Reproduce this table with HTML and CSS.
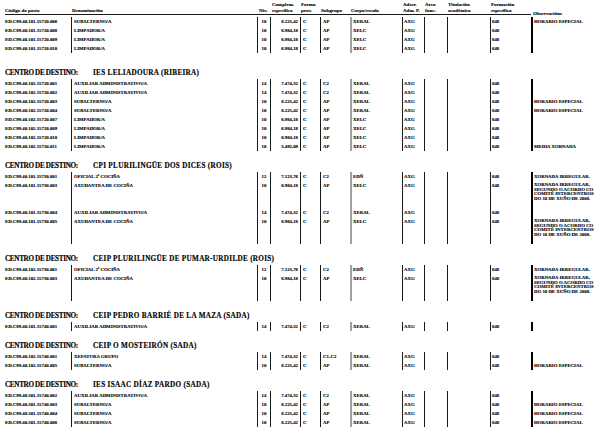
FILE: index.html
```html
<!DOCTYPE html>
<html lang="gl">
<head>
<meta charset="utf-8">
<title>Relación de postos</title>
<link rel="stylesheet" href="styles.css">
</head>
<body>
<div class="page">
  <div class="thead">
    <div class="h">Código do posto</div>
    <div class="h">Denominación</div>
    <div class="h">Niv.</div>
    <div class="h">Complem.<br>específico</div>
    <div class="h">Forma<br>prov.</div>
    <div class="h">Subgrupo</div>
    <div class="h">Corpo/escala</div>
    <div class="h">Adscr.<br>Adm. P.</div>
    <div class="h">Área<br>func.</div>
    <div class="h">Titulación<br>académica</div>
    <div class="h">Formación<br>específica</div>
    <div class="h">Observacións</div>
  </div>

  <div class="rows first-rows">
    <div class="row"><span class="code">ED.C99.40.101.15720.006</span><span class="den">SUBALTERNO/A</span><span class="niv">10</span><span class="comp">8.225,42</span><span class="forma">C</span><span class="sub">AP</span><span class="corpo">XERAL</span><span class="adscr">AXG</span><span class="area"></span><span class="tit"></span><span class="form">648</span><span class="obs">HORARIO ESPECIAL</span></div>
    <div class="row"><span class="code">ED.C99.40.101.15720.008</span><span class="den">LIMPADOR/A</span><span class="niv">10</span><span class="comp">6.984,18</span><span class="forma">C</span><span class="sub">AP</span><span class="corpo">XELC</span><span class="adscr">AXG</span><span class="area"></span><span class="tit"></span><span class="form">648</span><span class="obs"></span></div>
    <div class="row"><span class="code">ED.C99.40.101.15720.009</span><span class="den">LIMPADOR/A</span><span class="niv">10</span><span class="comp">6.984,18</span><span class="forma">C</span><span class="sub">AP</span><span class="corpo">XELC</span><span class="adscr">AXG</span><span class="area"></span><span class="tit"></span><span class="form">648</span><span class="obs"></span></div>
    <div class="row"><span class="code">ED.C99.40.101.15720.010</span><span class="den">LIMPADOR/A</span><span class="niv">10</span><span class="comp">6.984,18</span><span class="forma">C</span><span class="sub">AP</span><span class="corpo">XELC</span><span class="adscr">AXG</span><span class="area"></span><span class="tit"></span><span class="form">648</span><span class="obs"></span></div>
  </div>

  <section class="centro centro-first">
    <h2 class="centro-title"><span class="lbl">CENTRO DE DESTINO:</span><span class="nome">IES LELIADOURA (RIBEIRA)</span></h2>
    <div class="rows">
      <div class="row"><span class="code">ED.C99.40.102.15720.001</span><span class="den">AUXILIAR ADMINISTRATIVO/A</span><span class="niv">14</span><span class="comp">7.474,32</span><span class="forma">C</span><span class="sub">C2</span><span class="corpo">XERAL</span><span class="adscr">AXG</span><span class="area"></span><span class="tit"></span><span class="form">648</span><span class="obs"></span></div>
      <div class="row"><span class="code">ED.C99.40.102.15720.002</span><span class="den">AUXILIAR ADMINISTRATIVO/A</span><span class="niv">14</span><span class="comp">7.474,32</span><span class="forma">C</span><span class="sub">C2</span><span class="corpo">XERAL</span><span class="adscr">AXG</span><span class="area"></span><span class="tit"></span><span class="form">648</span><span class="obs"></span></div>
      <div class="row"><span class="code">ED.C99.40.102.15720.003</span><span class="den">SUBALTERNO/A</span><span class="niv">10</span><span class="comp">8.225,42</span><span class="forma">C</span><span class="sub">AP</span><span class="corpo">XERAL</span><span class="adscr">AXG</span><span class="area"></span><span class="tit"></span><span class="form">648</span><span class="obs">HORARIO ESPECIAL</span></div>
      <div class="row"><span class="code">ED.C99.40.102.15720.004</span><span class="den">SUBALTERNO/A</span><span class="niv">10</span><span class="comp">8.225,42</span><span class="forma">C</span><span class="sub">AP</span><span class="corpo">XERAL</span><span class="adscr">AXG</span><span class="area"></span><span class="tit"></span><span class="form">648</span><span class="obs">HORARIO ESPECIAL</span></div>
      <div class="row"><span class="code">ED.C99.40.102.15720.007</span><span class="den">LIMPADOR/A</span><span class="niv">10</span><span class="comp">6.984,18</span><span class="forma">C</span><span class="sub">AP</span><span class="corpo">XELC</span><span class="adscr">AXG</span><span class="area"></span><span class="tit"></span><span class="form">648</span><span class="obs"></span></div>
      <div class="row"><span class="code">ED.C99.40.102.15720.009</span><span class="den">LIMPADOR/A</span><span class="niv">10</span><span class="comp">6.984,18</span><span class="forma">C</span><span class="sub">AP</span><span class="corpo">XELC</span><span class="adscr">AXG</span><span class="area"></span><span class="tit"></span><span class="form">648</span><span class="obs"></span></div>
      <div class="row"><span class="code">ED.C99.40.102.15720.010</span><span class="den">LIMPADOR/A</span><span class="niv">10</span><span class="comp">6.984,18</span><span class="forma">C</span><span class="sub">AP</span><span class="corpo">XELC</span><span class="adscr">AXG</span><span class="area"></span><span class="tit"></span><span class="form">648</span><span class="obs"></span></div>
      <div class="row"><span class="code">ED.C99.40.102.15720.011</span><span class="den">LIMPADOR/A</span><span class="niv">10</span><span class="comp">3.492,09</span><span class="forma">C</span><span class="sub">AP</span><span class="corpo">XELC</span><span class="adscr">AXG</span><span class="area"></span><span class="tit"></span><span class="form">648</span><span class="obs">MEDIA XORNADA</span></div>
    </div>
  </section>

  <section class="centro">
    <h2 class="centro-title"><span class="lbl">CENTRO DE DESTINO:</span><span class="nome">CPI PLURILINGÜE DOS DICES (ROIS)</span></h2>
    <div class="rows">
      <div class="row"><span class="code">ED.C99.40.101.15730.001</span><span class="den">OFICIAL 2ª COCIÑA</span><span class="niv">12</span><span class="comp">7.123,76</span><span class="forma">C</span><span class="sub">C2</span><span class="corpo">EDÑ</span><span class="adscr">AXG</span><span class="area"></span><span class="tit"></span><span class="form">648</span><span class="obs">XORNADA IRREGULAR.</span></div>
      <div class="row tall"><span class="code">ED.C99.40.101.15730.003</span><span class="den">AXUDANTEA DE COCIÑA</span><span class="niv">10</span><span class="comp">6.984,18</span><span class="forma">C</span><span class="sub">AP</span><span class="corpo">XELC</span><span class="adscr">AXG</span><span class="area"></span><span class="tit"></span><span class="form">648</span><span class="obs multi">XORNADA IRREGULAR, SEGUNDO O ACORDO CO COMITÉ INTERCENTROS DO 10 DE XUÑO DE 2008.</span></div>
      <div class="row"><span class="code">ED.C99.40.101.15730.004</span><span class="den">AUXILIAR ADMINISTRATIVO/A</span><span class="niv">14</span><span class="comp">7.474,32</span><span class="forma">C</span><span class="sub">C2</span><span class="corpo">XERAL</span><span class="adscr">AXG</span><span class="area"></span><span class="tit"></span><span class="form">648</span><span class="obs"></span></div>
      <div class="row tall"><span class="code">ED.C99.40.101.15730.005</span><span class="den">AXUDANTEA DE COCIÑA</span><span class="niv">10</span><span class="comp">6.984,18</span><span class="forma">C</span><span class="sub">AP</span><span class="corpo">XELC</span><span class="adscr">AXG</span><span class="area"></span><span class="tit"></span><span class="form">648</span><span class="obs multi">XORNADA IRREGULAR, SEGUNDO O ACORDO CO COMITÉ INTERCENTROS DO 10 DE XUÑO DE 2008.</span></div>
    </div>
  </section>

  <section class="centro">
    <h2 class="centro-title"><span class="lbl">CENTRO DE DESTINO:</span><span class="nome">CEIP PLURILINGÜE DE PUMAR-URDILDE (ROIS)</span></h2>
    <div class="rows">
      <div class="row"><span class="code">ED.C99.40.102.15730.001</span><span class="den">OFICIAL 2ª COCIÑA</span><span class="niv">12</span><span class="comp">7.123,76</span><span class="forma">C</span><span class="sub">C2</span><span class="corpo">EDÑ</span><span class="adscr">AXG</span><span class="area"></span><span class="tit"></span><span class="form">648</span><span class="obs">XORNADA IRREGULAR.</span></div>
      <div class="row tall"><span class="code">ED.C99.40.102.15730.003</span><span class="den">AXUDANTEA DE COCIÑA</span><span class="niv">10</span><span class="comp">6.984,18</span><span class="forma">C</span><span class="sub">AP</span><span class="corpo">XELC</span><span class="adscr">AXG</span><span class="area"></span><span class="tit"></span><span class="form">648</span><span class="obs multi">XORNADA IRREGULAR, SEGUNDO O ACORDO CO COMITÉ INTERCENTROS DO 10 DE XUÑO DE 2008.</span></div>
    </div>
  </section>

  <section class="centro">
    <h2 class="centro-title"><span class="lbl">CENTRO DE DESTINO:</span><span class="nome">CEIP PEDRO BARRIÉ DE LA MAZA (SADA)</span></h2>
    <div class="rows">
      <div class="row"><span class="code">ED.C99.40.101.15740.001</span><span class="den">AUXILIAR ADMINISTRATIVO/A</span><span class="niv">14</span><span class="comp">7.474,32</span><span class="forma">C</span><span class="sub">C2</span><span class="corpo">XERAL</span><span class="adscr">AXG</span><span class="area"></span><span class="tit"></span><span class="form">648</span><span class="obs"></span></div>
    </div>
  </section>

  <section class="centro">
    <h2 class="centro-title"><span class="lbl">CENTRO DE DESTINO:</span><span class="nome">CEIP O MOSTEIRÓN (SADA)</span></h2>
    <div class="rows">
      <div class="row"><span class="code">ED.C99.40.102.15740.001</span><span class="den">XEFATURA GRUPO</span><span class="niv">14</span><span class="comp">7.474,32</span><span class="forma">C</span><span class="sub">C1-C2</span><span class="corpo">XERAL</span><span class="adscr">AXG</span><span class="area"></span><span class="tit"></span><span class="form">648</span><span class="obs"></span></div>
      <div class="row"><span class="code">ED.C99.40.102.15740.005</span><span class="den">SUBALTERNO/A</span><span class="niv">10</span><span class="comp">8.225,42</span><span class="forma">C</span><span class="sub">AP</span><span class="corpo">XERAL</span><span class="adscr">AXG</span><span class="area"></span><span class="tit"></span><span class="form">648</span><span class="obs">HORARIO ESPECIAL</span></div>
    </div>
  </section>

  <section class="centro">
    <h2 class="centro-title"><span class="lbl">CENTRO DE DESTINO:</span><span class="nome">IES ISAAC DÍAZ PARDO (SADA)</span></h2>
    <div class="rows">
      <div class="row"><span class="code">ED.C99.40.301.15740.002</span><span class="den">AUXILIAR ADMINISTRATIVO/A</span><span class="niv">14</span><span class="comp">7.474,32</span><span class="forma">C</span><span class="sub">C2</span><span class="corpo">XERAL</span><span class="adscr">AXG</span><span class="area"></span><span class="tit"></span><span class="form">648</span><span class="obs"></span></div>
      <div class="row"><span class="code">ED.C99.40.301.15740.003</span><span class="den">SUBALTERNO/A</span><span class="niv">10</span><span class="comp">8.225,42</span><span class="forma">C</span><span class="sub">AP</span><span class="corpo">XERAL</span><span class="adscr">AXG</span><span class="area"></span><span class="tit"></span><span class="form">648</span><span class="obs">HORARIO ESPECIAL</span></div>
      <div class="row"><span class="code">ED.C99.40.301.15740.004</span><span class="den">SUBALTERNO/A</span><span class="niv">10</span><span class="comp">8.225,42</span><span class="forma">C</span><span class="sub">AP</span><span class="corpo">XERAL</span><span class="adscr">AXG</span><span class="area"></span><span class="tit"></span><span class="form">648</span><span class="obs">HORARIO ESPECIAL</span></div>
      <div class="row"><span class="code">ED.C99.40.301.15740.006</span><span class="den">SUBALTERNO/A</span><span class="niv">10</span><span class="comp">8.225,42</span><span class="forma">C</span><span class="sub">AP</span><span class="corpo">XERAL</span><span class="adscr">AXG</span><span class="area"></span><span class="tit"></span><span class="form">648</span><span class="obs">HORARIO ESPECIAL</span></div>
    </div>
  </section>
</div>
</body>
</html>
```

FILE: styles.css
```css
* { box-sizing: border-box; }

html, body {
  margin: 0;
  padding: 0;
  background: #ffffff;
}

body {
  font-family: "Liberation Serif", "Times New Roman", serif;
  font-weight: bold;
  color: #000000;
  font-size: 4.8px;
  -webkit-text-stroke: 0.12px #000000;
}

.page {
  padding: 2px 0 0 5px;
  width: 616px;
}

.thead,
.row {
  display: grid;
  grid-template-columns: 66px 186px 13px 30px 20px 30px 52px 22px 23px 43px 41px 80px;
}

/* header */
.thead {
  align-items: end;
  width: 526px;
  border-bottom: 1px solid #1a1a1a;
  line-height: 6px;
  font-size: 5px;
}

.h {
  white-space: nowrap;
  padding-left: 1px;
}

.h:first-child { padding-left: 0; }
.h:nth-child(3) { padding-left: 2px; }
.h:nth-child(4) { padding-left: 2px; }
.h:nth-child(12) { padding-left: 2px; margin-bottom: -3px; }

/* rows */
.rows { margin-top: 1px; }
.first-rows { margin-top: 2px; }

.row {
  height: 9px;
  line-height: 9px;
}

.row.tall { height: 27px; }

.row > span {
  white-space: nowrap;
  overflow: visible;
}

.code { padding-left: 0; }

.den,
.niv,
.comp,
.forma,
.sub,
.adscr,
.area,
.tit,
.form {
  border-left: 1px solid #1a1a1a;
}

.den { padding-left: 2px; }
.niv { text-align: center; }
.comp { text-align: right; padding-right: 2px; }
.forma { padding-left: 2px; }
.sub { padding-left: 2px; }
.corpo { border-left: 2px solid #a0a0a0; padding-left: 1px; }
.adscr { padding-left: 1px; }
.form { padding-left: 1px; }
.obs { border-left: 2px solid #000000; padding-left: 1px; }

.obs.multi {
  white-space: normal;
  line-height: 4.6px;
  padding-top: 2.2px;
  width: 66px;
  padding-right: 2px;
}

/* centros */
.centro { margin-top: 10px; }
.centro-first { margin-top: 15px; }

.centro-title {
  margin: 0;
  font-size: 7.2px;
  line-height: 10px;
  height: 10px;
  font-weight: bold;
  white-space: nowrap;
  -webkit-text-stroke: 0.15px #000000;
}

.lbl {
  display: inline-block;
  width: 88px;
  letter-spacing: -0.35px;
}

.nome {
  letter-spacing: 0.3px;
}
```
